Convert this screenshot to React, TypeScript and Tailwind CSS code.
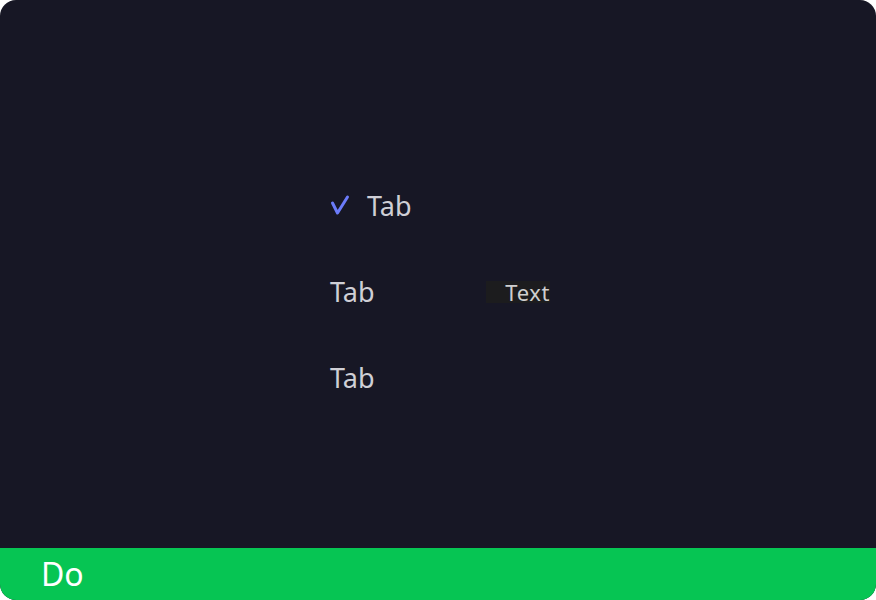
import React from "react";

const font = { fontFamily: '"Noto Sans", sans-serif' };

const Check = () => (
  <svg width="20" height="22" viewBox="0 0 20 22" className="shrink-0">
    <path
      d="M2.5 9 L7.5 19 L17.5 3"
      fill="none"
      stroke="#6b7bfa"
      strokeWidth="3"
      strokeLinecap="round"
      strokeLinejoin="round"
    />
  </svg>
);

export default function App() {
  return (
    <div
      className="w-[876px] h-[600px] rounded-[16px] overflow-hidden bg-[#171725] flex flex-col"
      style={font}
    >
      <div className="flex-1 flex flex-col pl-[330px] pt-[184px] gap-[44px]">
        <div className="flex items-center h-[42px] gap-[17px]">
          <Check />
          <span className="text-[27px] text-[#cfcfd6] leading-none">Tab</span>
        </div>
        <div className="flex items-center h-[42px]">
          <span className="text-[27px] text-[#cfcfd6] leading-none w-[156px]">Tab</span>
          <span className="bg-[#1c1c1e] h-[22px] w-[64px] mt-[2px] flex items-center justify-end text-[22px] tracking-[0.6px] text-[#cfcfcf] leading-none">
            Text
          </span>
        </div>
        <div className="flex items-center h-[42px]">
          <span className="text-[27px] text-[#cfcfd6] leading-none">Tab</span>
        </div>
      </div>
      <div className="h-[52px] bg-[#06c553] flex items-center pl-[41px]">
        <span className="text-[32px] text-white leading-none">Do</span>
      </div>
    </div>
  );
}
